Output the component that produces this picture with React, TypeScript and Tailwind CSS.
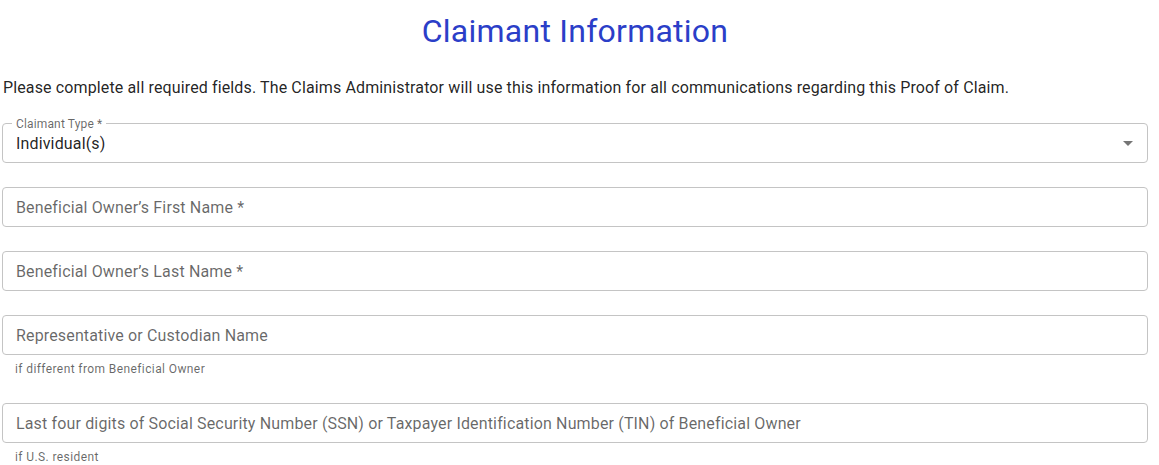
import React from "react";

const font = { fontFamily: "Roboto, 'Noto Sans', Arial, sans-serif" };

function Field({ label, helper }: { label: string; helper?: string }) {
  return (
    <div className="flex flex-col mb-6">
      <div className="h-[40px] border border-[#c4c4c4] rounded-[4px] flex items-center px-[13px] pt-[2px] text-[16px] text-[rgba(0,0,0,0.6)] tracking-[0.15px]">
        {label}
      </div>
      {helper && (
        <div className="mt-[4px] px-[13px] text-[12px] leading-[20px] text-[rgba(0,0,0,0.6)] tracking-[0.4px]">
          {helper}
        </div>
      )}
    </div>
  );
}

export default function App() {
  return (
    <div className="bg-white w-[1159px] h-[465px] overflow-hidden" style={font}>
      <div className="ml-[2px] w-[1146px] flex flex-col">
        <h1 className="mt-[10px] h-[42px] leading-[42px] text-center text-[32px] text-[#2b3ec8] tracking-[0.25px]">
          Claimant Information
        </h1>
        <p className="mt-[24px] ml-[1px] text-[16px] leading-[24px] text-[rgba(0,0,0,0.87)] tracking-[0.13px]">
          Please complete all required fields. The Claims Administrator will use this information for all communications regarding this Proof of Claim.
        </p>
        <div className="mt-[23px] mb-6 relative h-[40px] border border-[#c4c4c4] rounded-[4px] flex items-center px-[13px] pt-[2px]">
          <span className="absolute -top-[7px] left-[9px] px-[4px] bg-white text-[12px] leading-[14px] text-[rgba(0,0,0,0.6)] tracking-[0.15px]">
            Claimant Type *
          </span>
          <span className="text-[16px] text-[rgba(0,0,0,0.87)] tracking-[0.15px]">Individual(s)</span>
          <svg className="absolute right-[7px] top-[7px]" width="24" height="24" viewBox="0 0 24 24">
            <path d="M7 10l5 5 5-5z" fill="rgba(0,0,0,0.54)" />
          </svg>
        </div>
        <Field label="Beneficial Owner’s First Name *" />
        <Field label="Beneficial Owner’s Last Name *" />
        <Field label="Representative or Custodian Name" helper="if different from Beneficial Owner" />
        <Field
          label="Last four digits of Social Security Number (SSN) or Taxpayer Identification Number (TIN) of Beneficial Owner"
          helper="if U.S. resident"
        />
      </div>
    </div>
  );
}
